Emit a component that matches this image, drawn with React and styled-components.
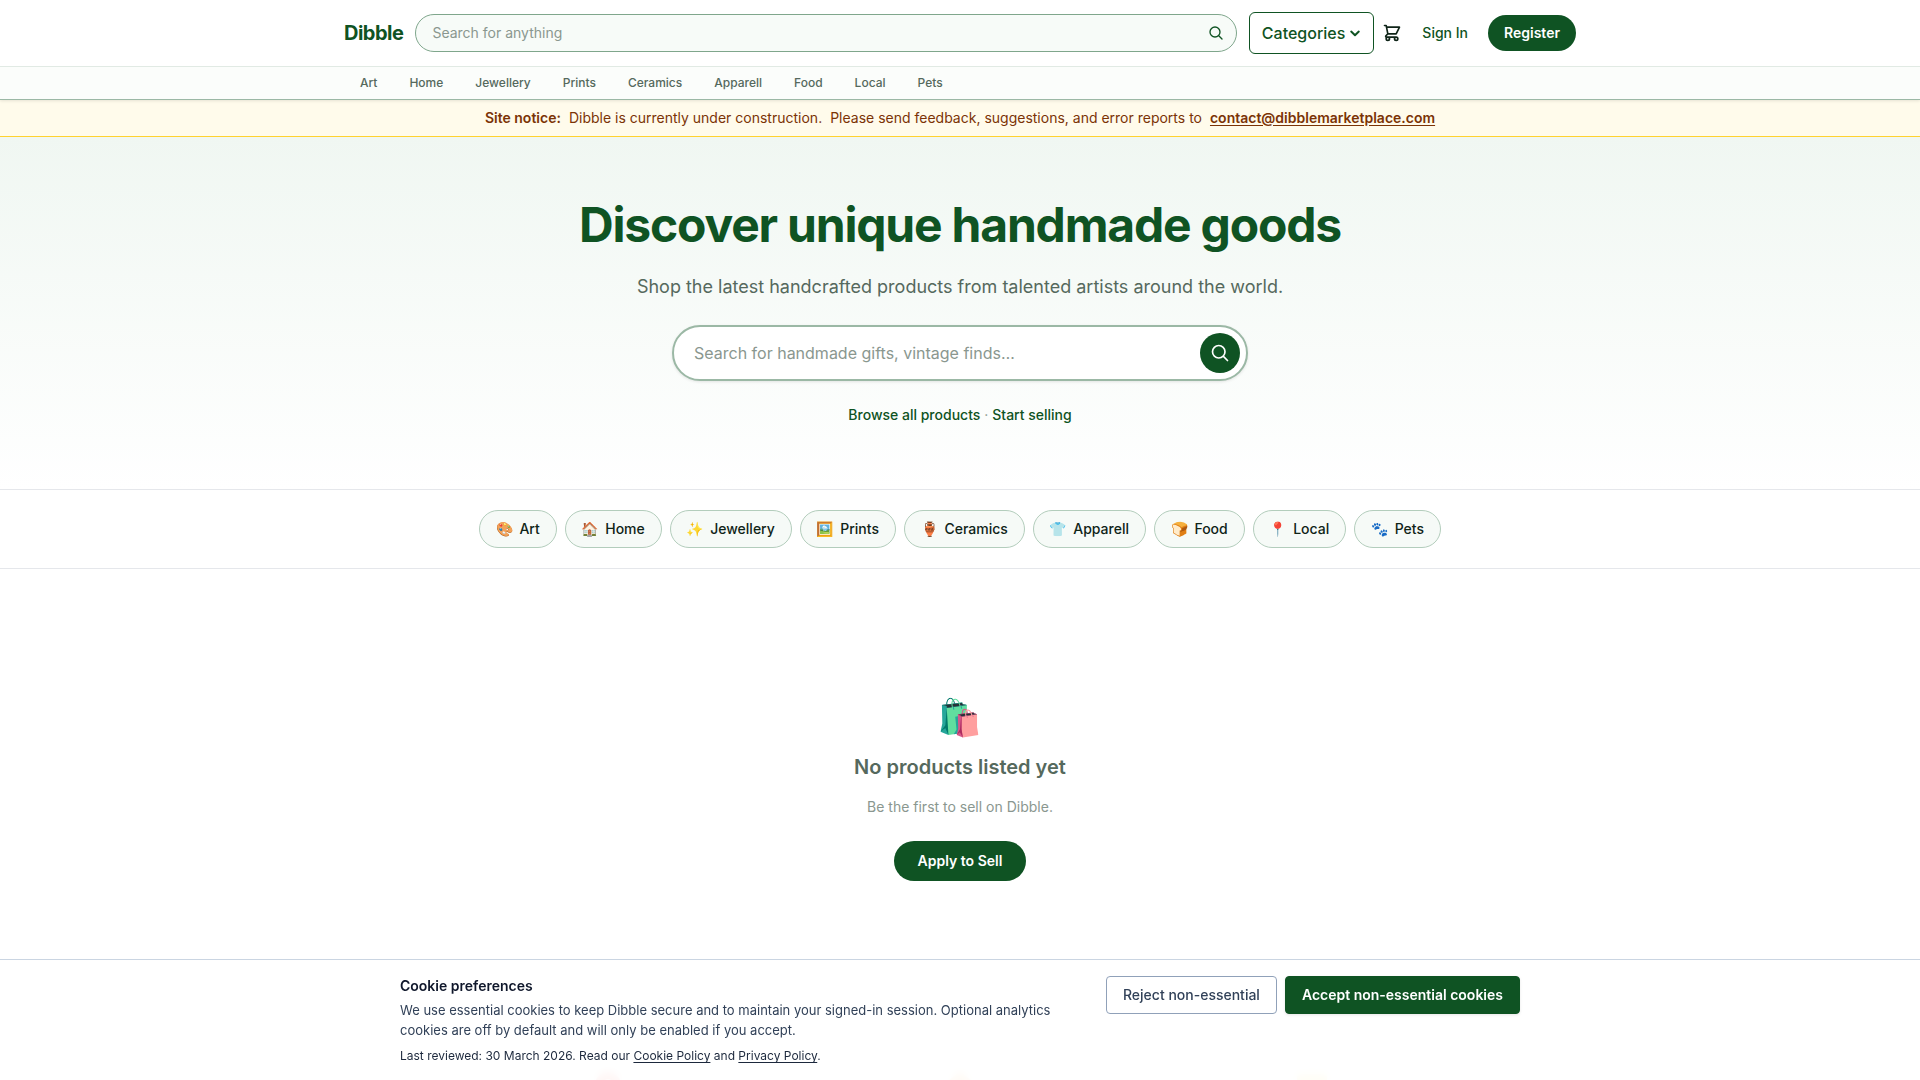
import { useState } from 'react';
import styled, { createGlobalStyle } from 'styled-components';

const GlobalStyle = createGlobalStyle`
  *, *::before, *::after {
    box-sizing: border-box;
  }

  body {
    margin: 0;
    background: #fff;
    color: #0f2418;
    font-family: Inter, 'Noto Color Emoji', sans-serif;
    font-size: 16px;
    line-height: 24px;
    overflow-x: hidden;
  }

  h1, h2, h3, p {
    margin: 0;
  }

  a {
    color: inherit;
    text-decoration: none;
  }

  button, input {
    font: inherit;
  }

  button {
    cursor: pointer;
  }
`;

const Header = styled.header`
  position: relative;
  z-index: 1;
  border-bottom: 1px solid #9bb8a5;
  box-shadow: 0 1px 3px rgba(0, 0, 0, 0.1);
`;

const TopBar = styled.div`
  display: flex;
  align-items: center;
  max-width: 1280px;
  height: 66px;
  margin: 0 auto;
  padding: 0 24px;
`;

const Logo = styled.a`
  margin-right: 12px;
  color: #0f5323;
  font-size: 20px;
  font-weight: 700;
  line-height: 28px;
  letter-spacing: -0.025em;
`;

const SearchForm = styled.form`
  flex: 1;
  display: flex;
  align-items: center;
  height: 38px;
  padding: 0 12px 0 16px;
  border: 1px solid #7fa68c;
  border-radius: 19px;
  background: #f7fbf8;
`;

const SearchInput = styled.input`
  flex: 1;
  min-width: 0;
  padding: 0;
  border: 0;
  outline: 0;
  background: transparent;
  font-size: ${props => (props.$large ? '16px' : '14px')};

  &::placeholder {
    color: #8a978f;
    opacity: 1;
  }
`;

const IconButton = styled.button`
  display: flex;
  padding: 0;
  border: 0;
  background: transparent;
  color: ${props => props.$color || '#0f5323'};
`;

const CategoriesButton = styled.button`
  display: flex;
  align-items: center;
  gap: 4px;
  height: 42px;
  margin: 0 8px 0 12px;
  padding: 0 12px;
  border: 1px solid #0f5323;
  border-radius: 6px;
  background: #fff;
  color: #0f5323;
  font-weight: 500;
`;

const SignIn = styled.a`
  margin: 0 20px;
  color: #0f5323;
  font-size: 14px;
  font-weight: 500;
  line-height: 20px;
`;

const PillLink = styled.a`
  padding: ${props => (props.$wide ? '10px 24px' : '8px 16px')};
  border-radius: 20px;
  background: #0f5323;
  color: #fff;
  font-size: 14px;
  font-weight: 600;
  line-height: 20px;
`;

const NavBar = styled.nav`
  border-top: 1px solid #e1eae4;
  background: #fbfdfb;
`;

const NavList = styled.div`
  display: flex;
  gap: 8px;
  max-width: 1280px;
  margin: 0 auto;
  padding: 0 28px;

  a {
    padding: 8px 12px;
    color: #55695d;
    font-size: 12px;
    font-weight: 500;
    line-height: 16px;
  }
`;

const Notice = styled.div`
  display: flex;
  justify-content: center;
  gap: 8px;
  padding: 8px 16px;
  border-bottom: 1px solid #ffd230;
  background: #fffbeb;
  color: #7b3306;
  font-size: 14px;
  line-height: 20px;

  strong {
    font-weight: 600;
  }

  a {
    font-weight: 600;
    text-decoration: underline;
    text-underline-offset: 2px;
  }
`;

const Hero = styled.section`
  display: flex;
  flex-direction: column;
  align-items: center;
  padding: 64px 24px;
  border-bottom: 1px solid #e5e7eb;
  background: linear-gradient(#f0f7f2, #fff);
  text-align: center;
`;

const HeroTitle = styled.h1`
  color: #0f5323;
  font-size: 48px;
  font-weight: 700;
  line-height: 48px;
  letter-spacing: -0.025em;
`;

const HeroText = styled.p`
  margin: 24px 0;
  color: #55695d;
  font-size: 18px;
  line-height: 28px;
`;

const HeroSearch = styled.form`
  display: flex;
  align-items: center;
  width: 100%;
  max-width: 576px;
  height: 56px;
  padding: 0 6px 0 20px;
  border: 2px solid #9bb8a5;
  border-radius: 28px;
  background: #fff;
  box-shadow: 0 1px 3px rgba(0, 0, 0, 0.1);
`;

const RoundButton = styled.button`
  display: flex;
  align-items: center;
  justify-content: center;
  width: 40px;
  height: 40px;
  padding: 0;
  border: 0;
  border-radius: 50%;
  background: #0f5323;
  color: #fff;
`;

const HeroLinks = styled.p`
  margin-top: 24px;
  color: #8a978f;
  font-size: 14px;
  line-height: 20px;

  a {
    color: #0f5323;
    font-weight: 500;
  }
`;

const Chips = styled.section`
  display: flex;
  flex-wrap: wrap;
  justify-content: center;
  gap: 8px;
  padding: 20px 24px;
  border-bottom: 1px solid #e5e7eb;
`;

const Chip = styled.a`
  display: flex;
  gap: 6px;
  padding: 8px 16px;
  border: 1px solid #b3cdbc;
  border-radius: 19px;
  background: #f6faf7;
  font-size: 14px;
  font-weight: 500;
  line-height: 20px;
`;

const Empty = styled.section`
  display: flex;
  flex-direction: column;
  align-items: center;
  padding: 128px 24px 160px;
`;

const EmptyIcon = styled.div`
  font-size: 36px;
  line-height: 40px;
`;

const EmptyTitle = styled.h2`
  margin: 16px 0;
  color: #55695d;
  font-size: 20px;
  font-weight: 600;
  line-height: 28px;
`;

const EmptyText = styled.p`
  margin-bottom: 24px;
  color: #8a978f;
  font-size: 14px;
  line-height: 20px;
`;

const Features = styled.section`
  display: grid;
  grid-template-columns: repeat(3, 1fr);
  justify-items: center;
  max-width: 1056px;
  margin: 0 auto;
  padding: 28px 0 48px;
`;

const CookieBanner = styled.aside`
  position: fixed;
  right: 0;
  bottom: 0;
  left: 0;
  z-index: 2;
  border-top: 1px solid #cad5e2;
  background: rgba(255, 255, 255, 0.95);
  backdrop-filter: blur(4px);
`;

const CookieInner = styled.div`
  display: flex;
  align-items: flex-start;
  justify-content: space-between;
  gap: 16px;
  max-width: 1152px;
  margin: 0 auto;
  padding: 16px;
`;

const CookieCopy = styled.div`
  max-width: 688px;
  color: #314158;
  font-size: 13px;
  line-height: 20px;
`;

const CookieTitle = styled.h3`
  margin-bottom: 4px;
  color: #0f172b;
  font-size: 14px;
  font-weight: 600;
  line-height: 20px;
`;

const CookieNote = styled.p`
  margin-top: 8px;
  color: #1d293d;
  font-size: 12px;
  line-height: 16px;

  a {
    text-decoration: underline;
    text-underline-offset: 2px;
  }
`;

const CookieActions = styled.div`
  display: flex;
  flex-shrink: 0;
  gap: 8px;
`;

const CookieButton = styled.button`
  height: 38px;
  padding: 0 16px;
  border: 1px solid ${props => (props.$primary ? '#0f5323' : '#90a1b9')};
  border-radius: 4px;
  background: ${props => (props.$primary ? '#0f5323' : '#fff')};
  color: ${props => (props.$primary ? '#fff' : '#314158')};
  box-shadow: ${props => (props.$primary ? '0 1px 3px rgba(0, 0, 0, 0.1)' : 'none')};
  font-size: 14px;
  font-weight: ${props => (props.$primary ? 600 : 500)};
  line-height: 20px;
`;

const categories = [
  { name: 'Art', icon: '🎨' },
  { name: 'Home', icon: '🏠' },
  { name: 'Jewellery', icon: '✨' },
  { name: 'Prints', icon: '🖼️' },
  { name: 'Ceramics', icon: '🏺' },
  { name: 'Apparell', icon: '👕' },
  { name: 'Food', icon: '🍞' },
  { name: 'Local', icon: '📍' },
  { name: 'Pets', icon: '🐾' },
];

function SearchIcon({ size, strokeWidth = 2 }) {
  return (
    <svg width={size} height={size} viewBox="0 0 24 24" fill="none" stroke="currentColor" strokeWidth={strokeWidth} strokeLinecap="round" strokeLinejoin="round">
      <path d="m21 21-5.197-5.197m0 0A7.5 7.5 0 1 0 5.196 5.196a7.5 7.5 0 0 0 10.607 10.607Z" />
    </svg>
  );
}

function ChevronIcon() {
  return (
    <svg width="12" height="12" viewBox="0 0 12 12" fill="none" stroke="currentColor" strokeWidth="2" strokeLinecap="round" strokeLinejoin="round">
      <path d="m2.2 4.6 3.8 3.6 3.8-3.6" />
    </svg>
  );
}

function CartIcon() {
  return (
    <svg width="20" height="20" viewBox="0 0 24 24" fill="none" stroke="currentColor" strokeWidth="2" strokeLinecap="round" strokeLinejoin="round">
      <path d="M3 3h2l.4 2M7 13h10l4-8H5.4M7 13 5.4 5M7 13l-2.293 2.293c-.63.63-.184 1.707.707 1.707H17m0 0a2 2 0 1 0 0 4 2 2 0 0 0 0-4zm-8 2a2 2 0 1 1-4 0 2 2 0 0 1 4 0z" />
    </svg>
  );
}

function App() {
  const [cookiesOpen, setCookiesOpen] = useState(true);

  return (
    <>
      <GlobalStyle />
      <Header>
        <TopBar>
          <Logo href="#">Dibble</Logo>
          <SearchForm role="search" onSubmit={e => e.preventDefault()}>
            <SearchInput type="text" aria-label="Search" placeholder="Search for anything" />
            <IconButton aria-label="Search"><SearchIcon size={16} /></IconButton>
          </SearchForm>
          <CategoriesButton type="button">
            Categories
            <ChevronIcon />
          </CategoriesButton>
          <IconButton type="button" aria-label="Cart" $color="#0f2418"><CartIcon /></IconButton>
          <SignIn href="#">Sign In</SignIn>
          <PillLink href="#">Register</PillLink>
        </TopBar>
        <NavBar>
          <NavList>
            {categories.map(category => (
              <a href="#" key={category.name}>{category.name}</a>
            ))}
          </NavList>
        </NavBar>
      </Header>

      <Notice>
        <strong>Site notice:</strong>
        <span>Dibble is currently under construction.</span>
        <span>Please send feedback, suggestions, and error reports to</span>
        <a href="mailto:contact@dibblemarketplace.com">contact@dibblemarketplace.com</a>
      </Notice>

      <main>
        <Hero>
          <HeroTitle>Discover unique handmade goods</HeroTitle>
          <HeroText>Shop the latest handcrafted products from talented artists around the world.</HeroText>
          <HeroSearch onSubmit={e => e.preventDefault()}>
            <SearchInput $large type="text" aria-label="Search products" placeholder="Search for handmade gifts, vintage finds…" />
            <RoundButton aria-label="Search"><SearchIcon size={20} /></RoundButton>
          </HeroSearch>
          <HeroLinks>
            <a href="#">Browse all products</a> · <a href="#">Start selling</a>
          </HeroLinks>
        </Hero>

        <Chips>
          {categories.map(category => (
            <Chip href="#" key={category.name}>
              <span>{category.icon}</span>
              {category.name}
            </Chip>
          ))}
        </Chips>

        <Empty>
          <EmptyIcon>🛍️</EmptyIcon>
          <EmptyTitle>No products listed yet</EmptyTitle>
          <EmptyText>Be the first to sell on Dibble.</EmptyText>
          <PillLink $wide href="#">Apply to Sell</PillLink>
        </Empty>

        <Features>
          <svg width="32" height="32" viewBox="0 0 32 32">
            <circle cx="16" cy="16" r="13" fill="#f0503c" />
            <circle cx="16" cy="16" r="6" fill="#fff" />
          </svg>
          <svg width="32" height="32" viewBox="0 0 32 32">
            <path d="M16 2 28 12v18H4V12Z" fill="#f5a742" />
          </svg>
          <svg width="32" height="32" viewBox="0 0 32 32">
            <rect x="1" y="5" width="30" height="22" rx="3" fill="#fbd84b" />
          </svg>
        </Features>
      </main>

      {cookiesOpen && (
        <CookieBanner aria-label="Cookie preferences">
          <CookieInner>
            <CookieCopy>
              <CookieTitle>Cookie preferences</CookieTitle>
              <p>
                We use essential cookies to keep Dibble secure and to maintain your signed-in session. Optional analytics
                cookies are off by default and will only be enabled if you accept.
              </p>
              <CookieNote>
                Last reviewed: 30 March 2026. Read our <a href="#">Cookie Policy</a> and <a href="#">Privacy Policy</a>.
              </CookieNote>
            </CookieCopy>
            <CookieActions>
              <CookieButton onClick={() => setCookiesOpen(false)}>Reject non-essential</CookieButton>
              <CookieButton $primary onClick={() => setCookiesOpen(false)}>Accept non-essential cookies</CookieButton>
            </CookieActions>
          </CookieInner>
        </CookieBanner>
      )}
    </>
  );
}

export default App;
